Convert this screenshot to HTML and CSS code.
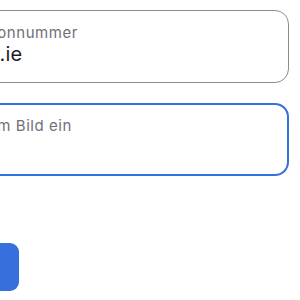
FILE: index.html
```html
<!DOCTYPE html>
<html lang="de">
<head>
    <meta charset="UTF-8">
    <meta name="viewport" content="width=device-width, initial-scale=1.0">
    <title>Anmelden</title>
    <link rel="stylesheet" href="styles.css">
</head>
<body>
    <form class="login">
        <div class="field">
            <span class="field-label">E-Mail oder Telefonnummer</span>
            <span class="field-value">mark@eircom.ie</span>
        </div>
        <div class="field field-focus">
            <span class="field-label">Den Code aus dem Bild ein</span>
            <span class="field-value"></span>
        </div>
        <div class="actions">
            <button type="button" class="btn-next">Weiter</button>
        </div>
    </form>
</body>
</html>
```

FILE: styles.css
```css
body {
    margin: 0;
    padding: 0;
    font-family: Inter, "Noto Sans", sans-serif;
    background: #fff;
    overflow: hidden;
}

.login {
    width: 439px;
    margin-left: -150px;
    padding-top: 10px;
}

.field {
    box-sizing: border-box;
    height: 73px;
    border: 1px solid #8c8c8c;
    border-radius: 14px;
    padding: 14px 16px 0;
    display: flex;
    flex-direction: column;
}

.field + .field {
    margin-top: 20px;
}

.field-focus {
    border: 2px solid #3570dd;
    padding: 13px 15px 0;
}

.field-label {
    font-size: 15px;
    line-height: 16px;
    letter-spacing: 0.55px;
    color: #707075;
    white-space: nowrap;
}

.field-value {
    margin-top: 1px;
    font-size: 20px;
    line-height: 24px;
    letter-spacing: 0.1px;
    color: #1c1c1e;
    min-height: 24px;
    white-space: nowrap;
}

.actions {
    margin-top: 67px;
    padding-left: 69px;
    display: flex;
}

.btn-next {
    width: 100px;
    height: 48px;
    border: none;
    border-radius: 9px;
    background: #3570dd;
    color: #fff;
    font-family: inherit;
    font-size: 17px;
    font-weight: 600;
}
```
